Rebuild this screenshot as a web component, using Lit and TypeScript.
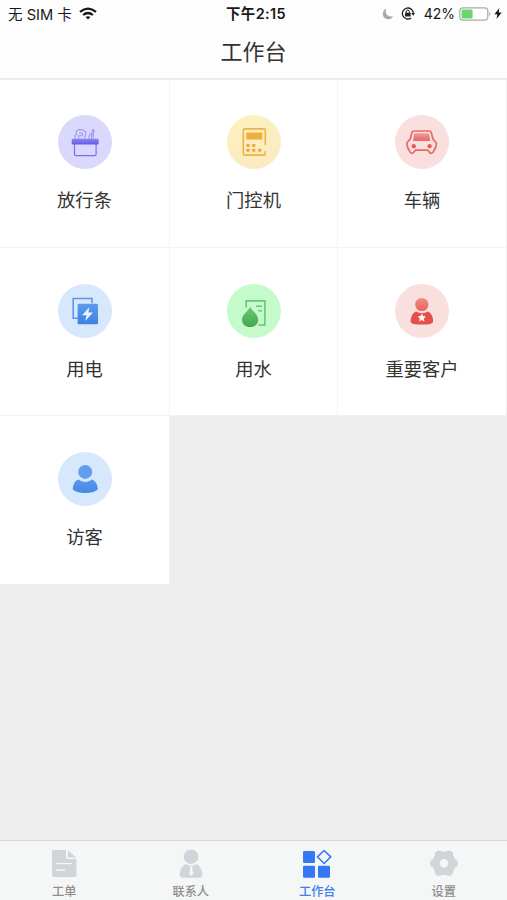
import { LitElement, html, svg, css, TemplateResult } from "lit";
import { customElement, property } from "lit/decorators.js";
import { classMap } from "lit/directives/class-map.js";

interface Entry {
  label: string;
  tone: string;
  art: TemplateResult;
}

const basket = svg`
  <defs><linearGradient id="a" x1="0" x2="0" y1="0" y2="1"><stop offset="0" stop-color="#8a84ee"/><stop offset="1" stop-color="#635ce8"/></linearGradient></defs>
  <g fill="none" stroke="#9c96f2" stroke-width="1.1" stroke-linejoin="round">
    <path d="M17.4 23.6 L16.8 20.6 L18.6 19.4 L18.2 16.4 L20.3 14.9 H25 L27.6 17 V20 L26.4 23.6"/>
    <path d="M21 18 H24.3 V20.8 H20.6 V23.4"/>
    <path d="M30.4 23.6 L31.8 19.5 L34 18.8 L33.2 23.6 M33.6 18 L34.8 14.6 L36.2 15.2 L35.2 19 V23.6"/>
  </g>
  <path d="M16.5 28.5 V39.2 Q16.5 40.6 17.9 40.6 H36.7 Q38.1 40.6 38.1 39.2 V28.5" fill="none" stroke="#766ff0" stroke-width="1.2"/>
  <rect x="13.7" y="23.8" width="27" height="5.6" rx="1.2" fill="url(#a)"/>`;

const keypad = svg`
  <path d="M38.3 30 V15.6 Q38.3 13.9 36.6 13.9 H18 Q16.3 13.9 16.3 15.6 V38.4 Q16.3 40.1 18 40.1 H36.6 Q38.3 40.1 38.3 38.4 V36" fill="none" stroke="#efb245" stroke-width="1.6"/>
  <rect x="19.3" y="17.6" width="16" height="7" rx=".7" fill="#efae3d"/>
  <g fill="#edaa38">
    <rect x="19.4" y="29" width="3.3" height="3" rx=".7"/><rect x="25.1" y="29" width="3.3" height="3" rx=".7"/>
    <rect x="19.4" y="33.7" width="3.3" height="3" rx=".7"/><rect x="25.1" y="33.7" width="3.3" height="3" rx=".7"/><rect x="31.1" y="33.7" width="3.4" height="3" rx=".7"/>
  </g>`;

const car = svg`
  <defs><linearGradient id="b" x1="0" x2="0" y1="0" y2="1"><stop offset="0" stop-color="#f19a98"/><stop offset="1" stop-color="#ea6562"/></linearGradient></defs>
  <path d="M18.9 16 H34.3 Q35.9 16 36.3 17.6 L38 24.2 L40.6 27 Q41.6 28 41.3 29.4 L40.5 32.6 Q40 34 39.2 34.8 L38.2 37 Q37.6 38.3 36.2 38.3 Q35 38.3 34.4 37.3 L32.8 35.2 H20.4 L18.8 37.3 Q18.2 38.3 17 38.3 Q15.6 38.3 15 37 L14 34.8 Q13.2 34 12.7 32.6 L11.9 29.4 Q11.6 28 12.6 27 L15.2 24.2 L16.9 17.6 Q17.3 16 18.9 16 Z" fill="none" stroke="#e96864" stroke-width="1.7" stroke-linejoin="round"/>
  <path d="M20 18.3 H33.2 Q34 18.3 34.2 19.1 L35.2 26 H18 L19 19.1 Q19.2 18.3 20 18.3 Z" fill="url(#b)"/>
  <circle cx="18.8" cy="31.2" r="2.1" fill="#e65752"/><circle cx="34.6" cy="31.2" r="2.1" fill="#e65752"/>`;

const power = svg`
  <defs><linearGradient id="c" x1="0" x2="0" y1="0" y2="1"><stop offset="0" stop-color="#5c9cec"/><stop offset="1" stop-color="#3f80e2"/></linearGradient></defs>
  <path d="M34 19 V14.6 H15.2 V34.2 H19.6" fill="none" stroke="#5793e9" stroke-width="1.5"/>
  <rect x="19.6" y="19.8" width="20.4" height="20.4" rx="1.2" fill="url(#c)"/>
  <path d="M31.4 23.2 L24 31.2 H28.6 L27.2 37 L35 28.6 H30.4 Z" fill="#e9f3ff"/>`;

const water = svg`
  <defs><linearGradient id="d" x1="0" x2="0" y1="0" y2="1"><stop offset="0" stop-color="#6ac972"/><stop offset="1" stop-color="#44a74c"/></linearGradient></defs>
  <path d="M19.2 23.5 V16.9 H37.9 V41 H31.2" fill="none" stroke="#67c776" stroke-width="1.6"/>
  <path d="M29 22.3 H35 M31.4 26.7 H35" stroke="#67c776" stroke-width="1.4"/>
  <path d="M23.2 22.8 C25.4 27.3 31.2 30.6 31.2 35.9 C31.2 40.1 27.6 43 23.1 43 C18.6 43 15 40.1 15 35.9 C15 30.6 20.9 27.3 23.2 22.8 Z" fill="url(#d)"/>`;

const vip = svg`
  <defs><linearGradient id="e" x1="0" x2="0" y1="0" y2="1"><stop offset="0" stop-color="#f08f89"/><stop offset="1" stop-color="#e6625d"/></linearGradient></defs>
  <circle cx="26.8" cy="20.5" r="6.6" fill="url(#e)"/>
  <path d="M21 27.6 Q24 29.3 27 29.3 Q30 29.3 33 27.6 Q38 30 38.1 37.4 Q37.8 40.6 26.8 40.6 Q15.7 40.6 15.6 37.4 Q15.8 30 21 27.6 Z" fill="#e34f4b"/>
  <path d="M26.8 29.6 L28.1 32.1 L31 32.5 L28.9 34.5 L29.4 37.4 L26.8 36 L24.2 37.4 L24.7 34.5 L22.6 32.5 L25.5 32.1 Z" fill="#fff0ee"/>`;

const visitor = svg`
  <defs><linearGradient id="f" x1="0" x2="0" y1="0" y2="1"><stop offset="0" stop-color="#5a98ed"/><stop offset="1" stop-color="#4688e8"/></linearGradient></defs>
  <circle cx="27.2" cy="19.9" r="7" fill="#629df0"/>
  <path d="M20.4 27.6 Q23.4 29.9 27.2 29.9 Q31 29.9 34 27.6 Q39 29.3 40 37 Q37 40.9 27.2 40.9 Q17.4 40.9 14.6 37 Q15.4 29.3 20.4 27.6 Z" fill="url(#f)"/>`;

const ENTRIES: Entry[] = [
  { label: "放行条", tone: "violet", art: basket },
  { label: "门控机", tone: "amber", art: keypad },
  { label: "车辆", tone: "rose", art: car },
  { label: "用电", tone: "sky", art: power },
  { label: "用水", tone: "mint", art: water },
  { label: "重要客户", tone: "rose", art: vip },
  { label: "访客", tone: "sky", art: visitor },
];

const TABS = [
  {
    label: "工单",
    art: svg`<path d="M4.5 2 H17 V9.2 Q17 11 18.8 11 H27.5 V27 Q27.5 29 25.5 29 H5 Q3 29 3 27 V3.5 Q3 2 4.5 2 Z M18.8 2.2 L27.3 9.6 H19.8 Q18.8 9.6 18.8 8.6 Z"/><path d="M7 15.6 H23 M7 22 H16" stroke="#f5f6f6" stroke-width="1.4"/>`,
  },
  {
    label: "联系人",
    art: svg`<circle cx="15" cy="8.7" r="7.3"/><path d="M9.5 16 Q12 17.8 15 17.8 Q18 17.8 20.5 16 Q25.6 18.5 26.3 26 Q26.5 29.8 23 29.8 H7 Q3.5 29.8 3.7 26 Q4.4 18.5 9.5 16 Z"/><path d="M13.7 18.3 H16.5 L16.1 20.4 L17.5 25.5 L15.1 28 L12.9 25.5 L14.2 20.4 Z" fill="#f5f6f6"/>`,
  },
  {
    label: "工作台",
    art: svg`<rect x="1" y="3" width="12" height="12" rx="1.2"/><rect x="1" y="17.8" width="12" height="12" rx="1.2"/><rect x="16" y="17.8" width="12" height="12" rx="1.2"/><path d="M22.1 2.5 L28.8 8.8 L22.1 15.5 L15.4 8.8 Z" fill="none" stroke="#3478f6" stroke-width="1.6" stroke-linejoin="round"/>`,
  },
  {
    label: "设置",
    art: svg`<circle cx="15" cy="15.2" r="11.7"/>
      <circle cx="5.5" cy="15.2" r="4.5"/><circle cx="24.5" cy="15.2" r="4.5"/>
      <circle cx="10.1" cy="7" r="4.5"/><circle cx="19.9" cy="7" r="4.5"/>
      <circle cx="10.1" cy="23.4" r="4.5"/><circle cx="19.9" cy="23.4" r="4.5"/>
      <circle cx="15" cy="15.2" r="4.2" fill="#f5f6f6"/>`,
  },
];

@customElement("status-bar")
class StatusBar extends LitElement {
  static styles = css`
    :host { display: grid; grid-template-columns: 1fr auto 1fr; align-items: center; height: 27px; padding: 0 5px 0 8px; font-size: 14.6px; color: #181818; white-space: nowrap; }
    .side { display: flex; align-items: center; }
    .left { gap: 7px; }
    .right { justify-content: flex-end; }
    .time { padding-left: 2px; font-weight: 600; font-size: 14.4px; letter-spacing: 0.4px; line-height: 24px; }
    .moon { margin-right: 7px; }
    .lock { margin-right: 9px; }
    .pct { margin-right: 4px; font-size: 14px; }
    .batt { margin-right: 3px; }
    svg { display: block; }
  `;
  render() {
    return html`
      <div class="side left">
        <span>无 SIM 卡</span>
        <svg width="18" height="13" viewBox="0 0 18 13">
          <g fill="none" stroke="#151515" stroke-width="2.2"><path d="M1 4.9 Q9 -1.6 17 4.9"/><path d="M4.1 8 Q9 4 13.9 8"/></g>
          <path d="M6.5 10 Q9 8.3 11.5 10 L9 12.6 Z" fill="#151515"/>
        </svg>
      </div>
      <div class="time">下午2:15</div>
      <div class="side right">
        <svg class="moon" width="12" height="12" viewBox="0 0 12 12"><path d="M4.2 .6 Q2.6 5.6 6.2 7.8 Q8.8 9.2 11.2 8 Q9.2 11.7 5.5 11.2 Q1 10.4 .8 6 Q.8 2.5 4.2 .6 Z" fill="#aaa"/></svg>
        <svg class="lock" width="14" height="13" viewBox="0 0 14 13">
          <path d="M12.4 6.5 A5.5 5.5 0 1 0 10.2 10.9" fill="none" stroke="#222" stroke-width="1.3"/>
          <path d="M10.2 6 H14 L12.2 8.7 Z" fill="#222"/>
          <rect x="4" y="5.7" width="5.6" height="3.9" rx=".5" fill="#222"/><path d="M5.2 6 V4.8 A1.6 1.6 0 0 1 8.4 4.8 V6" fill="none" stroke="#222"/>
        </svg>
        <span class="pct">42%</span>
        <svg class="batt" width="32" height="14" viewBox="0 0 32 14">
          <rect x=".8" y=".8" width="28" height="12.4" rx="3.2" fill="#fff" stroke="#a9a9a9" stroke-width="1.2"/>
          <rect x="2.6" y="2.5" width="11" height="9" rx="1" fill="#6bd66d"/><path d="M30 4.8 Q32 7 30 9.2 Z" fill="#aaa"/>
        </svg>
        <svg width="8" height="11" viewBox="0 0 8 11"><path d="M5.4 0 L.4 6.2 H3.4 L2.5 11 L7.7 4.5 H4.6 Z" fill="#151515"/></svg>
      </div>`;
  }
}

@customElement("entry-tile")
class EntryTile extends LitElement {
  @property({ attribute: false }) entry!: Entry;
  static styles = css`
    :host { display: flex; flex-direction: column; align-items: center; box-sizing: border-box; padding: 36.4px 0 0; background: #fff; box-shadow: 0 0 0 1px rgba(255, 255, 255, 0.2); }
    .disc { width: 54px; height: 54px; border-radius: 50%; }
    .disc svg { display: block; }
    .violet { background: #dad8fc; }
    .amber { background: linear-gradient(160deg, #fbf3bd, #fce8c4); }
    .rose { background: #f9dfdd; }
    .sky { background: #d7e8fd; }
    .mint { background: #c5fbcb; }
    .label { margin-top: 17.6px; font-size: 18.3px; line-height: 27px; color: #333; }
  `;
  render() {
    return html`
      <div class=${classMap({ disc: true, [this.entry.tone]: true })}>
        <svg width="54" height="54" viewBox="0 0 54 54">${this.entry.art}</svg>
      </div>
      <div class="label">${this.entry.label}</div>`;
  }
}

@customElement("tab-bar")
class TabBar extends LitElement {
  static styles = css`
    :host { display: grid; grid-template-columns: repeat(4, 1fr); box-sizing: border-box; height: 60px; padding-left: 1px; border-top: 1px solid #d6d6d6; background: #f5f6f6; }
    .tab { display: flex; flex-direction: column; align-items: center; padding-top: 7px; color: #8e8e8e; font-size: 12.2px; font-weight: 500; line-height: 18px; }
    .tab svg { display: block; fill: #d0d5d9; }
    .text { margin-top: 4px; }
    .active { color: #3f7ef4; }
    .active svg { fill: #3478f6; }
  `;
  render() {
    return TABS.map((t, i) => html`
      <div class=${classMap({ tab: true, active: i === 2 })}>
        <svg width="30" height="31" viewBox="0 0 30 31">${t.art}</svg>
        <span class="text">${t.label}</span>
      </div>`);
  }
}

@customElement("app-root")
class AppRoot extends LitElement {
  static styles = css`
    :host { display: flex; flex-direction: column; height: 900px; background: #eee; font-family: Inter, "Noto Sans CJK SC", sans-serif; }
    .head { flex: none; position: relative; z-index: 1; box-sizing: border-box; height: 79px; border-bottom: 1px solid #e9e9e9; box-shadow: 0 1px 0 #ededed; background: #fdfdfd; }
    .title { margin: 8px 0 0; text-align: center; font-size: 22px; font-weight: 400; line-height: 34px; color: #333; }
    .grid { flex: 1; display: grid; grid-template-columns: 169px 167px 168px; grid-template-rows: 168px 167px 168px; gap: 1px; align-content: start; }
  `;
  render() {
    return html`
      <header class="head">
        <status-bar></status-bar>
        <h1 class="title">工作台</h1>
      </header>
      <main class="grid">${ENTRIES.map((e) => html`<entry-tile .entry=${e}></entry-tile>`)}</main>
      <tab-bar></tab-bar>`;
  }
}
